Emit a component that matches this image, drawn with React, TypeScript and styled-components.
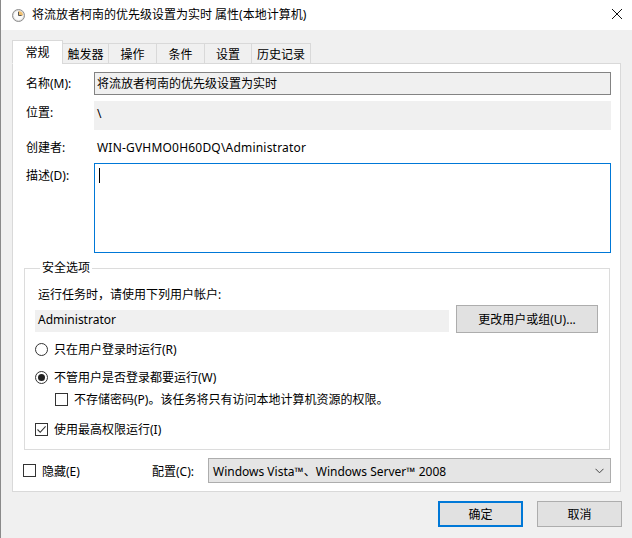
import React from 'react';
import styled, { createGlobalStyle } from 'styled-components';

const GlobalStyle = createGlobalStyle`
  html, body {
    margin: 0;
    padding: 0;
    background: #f0f0f0;
  }
  body {
    font-family: "Noto Sans", "Noto Sans CJK SC", sans-serif;
    font-size: 12px;
    color: #000;
  }
  * {
    box-sizing: border-box;
  }
`;

const Window = styled.div`
  width: 632px;
  height: 538px;
  display: flex;
  flex-direction: column;
  background: #f0f0f0;
  border-left: 1px solid #8a8a8a;
  overflow: hidden;
`;

const TitleBar = styled.div`
  height: 30px;
  flex: none;
  display: flex;
  align-items: center;
  padding-left: 11px;
  background: #fff;
`;

const TitleText = styled.span`
  margin-left: 7px;
  line-height: 16px;
  flex: 1;
  white-space: nowrap;
`;

const CloseButton = styled.div`
  width: 10px;
  height: 10px;
  margin-right: 10px;
  margin-top: -2px;
  display: flex;
`;

const Body = styled.div`
  flex: 1;
  display: flex;
  flex-direction: column;
  padding: 10px 0 0 11px;
`;

const TabStrip = styled.div`
  display: flex;
  align-items: flex-end;
  height: 24px;
  position: relative;
  z-index: 1;
`;

const Tab = styled.div<{ $active?: boolean; $width: number }>`
  width: ${(p) => p.$width}px;
  height: ${(p) => (p.$active ? 24 : 21)}px;
  display: flex;
  align-items: center;
  justify-content: center;
  background: ${(p) => (p.$active ? '#fff' : '#f0f0f0')};
  border: 1px solid #d9d9d9;
  border-bottom: ${(p) => (p.$active ? '1px solid #fff' : '1px solid #d9d9d9')};
  margin-left: ${(p) => (p.$active ? 0 : -1)}px;
  padding-top: ${(p) => (p.$active ? 0 : 1)}px;
  white-space: nowrap;
  &:first-child {
    margin-left: 0;
  }
`;

const Panel = styled.div`
  width: 609px;
  height: 429px;
  margin-top: -1px;
  background: #fff;
  border: 1px solid #d9d9d9;
  padding-top: 8px;
  display: flex;
  flex-direction: column;
`;

const FieldRow = styled.div<{ $top?: number; $align?: string }>`
  display: flex;
  align-items: ${(p) => p.$align || 'center'};
  margin-top: ${(p) => p.$top || 0}px;
  padding-left: 13px;
`;

const Label = styled.div<{ $pad?: number }>`
  width: 68px;
  flex: none;
  line-height: 18px;
  padding-top: ${(p) => p.$pad || 0}px;
  white-space: nowrap;
`;

const ReadField = styled.div<{ $height: number; $bordered?: boolean }>`
  width: 517px;
  height: ${(p) => p.$height}px;
  background: #f0f0f0;
  border: 1px solid ${(p) => (p.$bordered ? '#838383' : '#f0f0f0')};
  padding: ${(p) => (p.$bordered ? '0 2px' : '3px 2px')};
  display: flex;
  align-items: ${(p) => (p.$bordered ? 'center' : 'flex-start')};
  line-height: 18px;
  white-space: nowrap;
`;

const PlainValue = styled.div`
  padding-left: 3px;
  line-height: 24px;
  white-space: nowrap;
  letter-spacing: 0.2px;
`;

const TextArea = styled.div`
  width: 517px;
  height: 90px;
  border: 1px solid #0078d7;
  padding: 4px 0 0 4px;
`;

const Caret = styled.div`
  width: 1px;
  height: 15px;
  background: #000;
`;

const Group = styled.fieldset`
  margin: 7px 10px 0 11px;
  padding: 0 11px 10px 10px;
  border: 1px solid #dcdcdc;
  min-width: 0;
  display: flex;
  flex-direction: column;
`;

const Legend = styled.legend`
  margin-left: 5px;
  padding: 0 2px;
  line-height: 16px;
`;

const GroupText = styled.div`
  margin-top: 10px;
  padding-left: 3px;
  line-height: 18px;
`;

const AccountRow = styled.div`
  display: flex;
  align-items: flex-start;
  gap: 7px;
  margin-top: 1px;
`;

const AccountField = styled.div`
  width: 414px;
  height: 22px;
  margin-top: 5px;
  background: #f0f0f0;
  padding-left: 3px;
  line-height: 20px;
`;

const Button = styled.div<{ $default?: boolean; $width: number; $height: number }>`
  width: ${(p) => p.$width}px;
  height: ${(p) => p.$height}px;
  display: flex;
  align-items: center;
  justify-content: center;
  background: #e1e1e1;
  border: 1px solid ${(p) => (p.$default ? '#0078d7' : '#adadad')};
  box-shadow: ${(p) => (p.$default ? 'inset 0 0 0 1px #0078d7' : 'none')};
  white-space: nowrap;
`;

const OptionRow = styled.div<{ $top: number; $indent?: number }>`
  display: flex;
  align-items: center;
  height: 20px;
  margin-top: ${(p) => p.$top}px;
  padding-left: ${(p) => p.$indent || 0}px;
  gap: 6px;
  white-space: nowrap;
`;

const RadioCircle = styled.div<{ $checked?: boolean }>`
  width: 13px;
  height: 13px;
  border-radius: 50%;
  border: 1px solid #333;
  background: #fff;
  display: flex;
  align-items: center;
  justify-content: center;
  flex: none;
  &::after {
    content: '';
    display: ${(p) => (p.$checked ? 'block' : 'none')};
    width: 7px;
    height: 7px;
    border-radius: 50%;
    background: #222;
  }
`;

const CheckBox = styled.div`
  width: 13px;
  height: 13px;
  border: 1px solid #333;
  background: #fff;
  flex: none;
  display: flex;
`;

const BottomRow = styled.div`
  display: flex;
  align-items: center;
  height: 25px;
  margin-top: 8px;
  padding-left: 10px;
`;

const HiddenOption = styled.div`
  width: 129px;
  display: flex;
  align-items: center;
  gap: 6px;
`;

const ConfigLabel = styled.div`
  width: 56px;
`;

const Select = styled.div`
  width: 403px;
  height: 25px;
  background: #e5e5e5;
  border: 1px solid #adadad;
  display: flex;
  align-items: center;
  justify-content: space-between;
  padding: 0 6px 0 4px;
  white-space: nowrap;
`;

const Footer = styled.div`
  display: flex;
  justify-content: flex-end;
  gap: 14px;
  margin-top: 9px;
  padding-right: 10px;
`;

const ClockIcon = () => (
  <svg width="13" height="13" viewBox="0 0 13 13">
    <circle cx="6.5" cy="6.5" r="6" fill="#e0e0e0" stroke="#8d8d8d" />
    <circle cx="6.5" cy="6.5" r="4.6" fill="#fbfbfb" />
    <path d="M6.5 6.5 L6.5 1.9 A4.6 4.6 0 0 1 11.1 6.5 Z" fill="#f0c070" />
    <path d="M6.5 2.8 V6.5 H9.6" fill="none" stroke="#555" strokeWidth="1" />
  </svg>
);

const CloseIcon = () => (
  <svg width="10" height="10" viewBox="0 0 10 10">
    <path d="M0 0 L10 10 M10 0 L0 10" stroke="#111" strokeWidth="1" />
  </svg>
);

const CheckMark = () => (
  <svg width="11" height="11" viewBox="0 0 11 11">
    <path d="M1.5 5.5 L4.2 8.3 L9.6 2.3" fill="none" stroke="#333" strokeWidth="1.1" />
  </svg>
);

const Chevron = () => (
  <svg width="9" height="6" viewBox="0 0 9 6">
    <path d="M0.5 0.8 L4.5 4.8 L8.5 0.8" fill="none" stroke="#444" strokeWidth="1" />
  </svg>
);

const tabs = [
  { label: '常规', width: 51 },
  { label: '触发器', width: 47 },
  { label: '操作', width: 49 },
  { label: '条件', width: 49 },
  { label: '设置', width: 48 },
  { label: '历史记录', width: 60 },
];

const App: React.FC = () => {
  return (
    <Window>
      <GlobalStyle />
      <TitleBar>
        <ClockIcon />
        <TitleText>将流放者柯南的优先级设置为实时 属性(本地计算机)</TitleText>
        <CloseButton>
          <CloseIcon />
        </CloseButton>
      </TitleBar>
      <Body>
        <TabStrip>
          {tabs.map((t, i) => (
            <Tab key={t.label} $active={i === 0} $width={t.width}>
              {t.label}
            </Tab>
          ))}
        </TabStrip>
        <Panel>
          <FieldRow>
            <Label>名称(M):</Label>
            <ReadField $height={23} $bordered>
              将流放者柯南的优先级设置为实时
            </ReadField>
          </FieldRow>
          <FieldRow $top={6} $align="flex-start">
            <Label $pad={3}>位置:</Label>
            <ReadField $height={29}>\</ReadField>
          </FieldRow>
          <FieldRow $top={6}>
            <Label>创建者:</Label>
            <PlainValue>WIN-GVHMO0H60DQ\Administrator</PlainValue>
          </FieldRow>
          <FieldRow $top={3} $align="flex-start">
            <Label $pad={4}>描述(D):</Label>
            <TextArea>
              <Caret />
            </TextArea>
          </FieldRow>
          <Group>
            <Legend>安全选项</Legend>
            <GroupText>运行任务时，请使用下列用户帐户:</GroupText>
            <AccountRow>
              <AccountField>Administrator</AccountField>
              <Button $width={142} $height={28}>
                更改用户或组(U)...
              </Button>
            </AccountRow>
            <OptionRow $top={6}>
              <RadioCircle />
              只在用户登录时运行(R)
            </OptionRow>
            <OptionRow $top={8}>
              <RadioCircle $checked />
              不管用户是否登录都要运行(W)
            </OptionRow>
            <OptionRow $top={2} $indent={20}>
              <CheckBox />
              不存储密码(P)。该任务将只有访问本地计算机资源的权限。
            </OptionRow>
            <OptionRow $top={10}>
              <CheckBox>
                <CheckMark />
              </CheckBox>
              使用最高权限运行(I)
            </OptionRow>
          </Group>
          <BottomRow>
            <HiddenOption>
              <CheckBox />
              隐藏(E)
            </HiddenOption>
            <ConfigLabel>配置(C):</ConfigLabel>
            <Select>
              <span>Windows Vista™、Windows Server™ 2008</span>
              <Chevron />
            </Select>
          </BottomRow>
        </Panel>
        <Footer>
          <Button $default $width={85} $height={26}>
            确定
          </Button>
          <Button $width={85} $height={26}>
            取消
          </Button>
        </Footer>
      </Body>
    </Window>
  );
};

export default App;
